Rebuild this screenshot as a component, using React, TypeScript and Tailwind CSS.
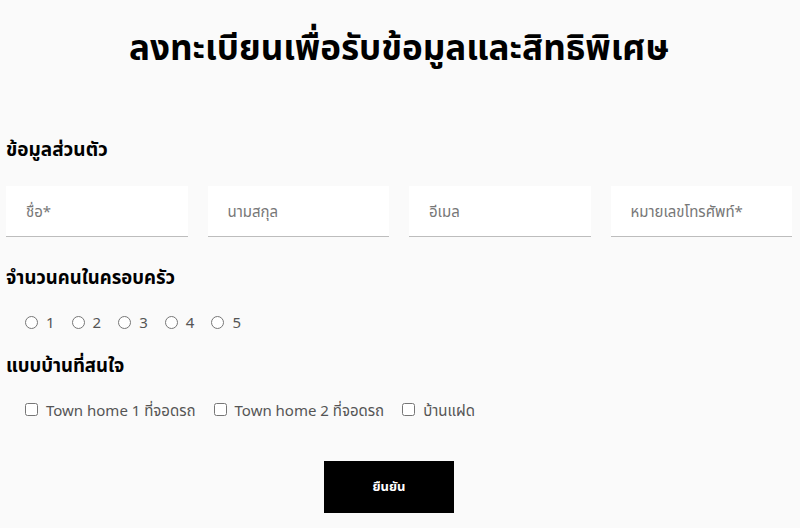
export default function App() {
  const fields = ['ชื่อ*', 'นามสกุล', 'อีเมล', 'หมายเลขโทรศัพท์*']
  const counts = ['1', '2', '3', '4', '5']
  const homes = ['Town home 1 ที่จอดรถ', 'Town home 2 ที่จอดรถ', 'บ้านแฝด']

  return (
    <div className="min-h-[528px] w-[800px] bg-[#fafafa] pl-[6px] pr-[8px] font-['Noto_Sans','Noto_Sans_Thai','Loma',sans-serif] text-black">
      {/* Title */}
      <h1 className="pt-[24px] text-center text-[35px] font-bold leading-[46px]">
        ลงทะเบียนเพื่อรับข้อมูลและสิทธิพิเศษ
      </h1>

      {/* Personal info */}
      <h2 className="mt-[66px] text-[19px] font-bold leading-[26px]">ข้อมูลส่วนตัว</h2>
      <div className="mt-[24px] grid grid-cols-4 gap-[20px]">
        {fields.map((f) => (
          <input
            key={f}
            placeholder={f}
            className="h-[51px] w-full border-b border-[#bdbdbd] bg-white px-[20px] text-[15px] text-[#333] outline-none placeholder:text-[#777]"
          />
        ))}
      </div>

      {/* Family size */}
      <h2 className="mt-[27px] text-[18.5px] font-bold leading-[26px]">จำนวนคนในครอบครัว</h2>
      <div className="mt-[21px] flex items-center gap-[17px] pl-[19px]">
        {counts.map((c) => (
          <label key={c} className="flex items-center gap-[8px] text-[15px] text-[#555]">
            <input type="radio" name="count" className="m-0 h-[13px] w-[13px]" />
            {c}
          </label>
        ))}
      </div>

      {/* House type */}
      <h2 className="mt-[18px] text-[18.5px] font-bold leading-[26px]">แบบบ้านที่สนใจ</h2>
      <div className="mt-[21px] flex items-center gap-[18px] pl-[19px]">
        {homes.map((h) => (
          <label key={h} className="flex items-center gap-[8px] text-[15px] text-[#555]">
            <input type="checkbox" className="m-0 h-[13px] w-[13px]" />
            {h}
          </label>
        ))}
      </div>

      <div className="mt-[40px] flex justify-center pr-[20px]">
        <button className="h-[52px] w-[130px] bg-black text-[13px] font-bold text-white">ยืนยัน</button>
      </div>
    </div>
  )
}
